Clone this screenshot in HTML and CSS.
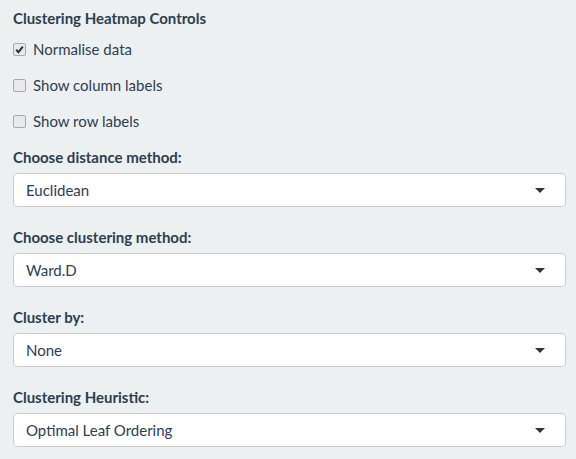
FILE: index.html
```html
<!DOCTYPE html>
<html>
<head>
<meta charset="utf-8">
<link rel="stylesheet" href="styles.css">
</head>
<body>
<div class="panel">
  <div class="title">Clustering Heatmap Controls</div>
  <div class="checks">
    <label class="check"><span class="box checked"><svg width="9" height="9" viewBox="0 0 9 9"><path d="M1.2 4.8 L3.5 7.2 L7.8 1.6" fill="none" stroke="#333" stroke-width="2"/></svg></span>Normalise data</label>
    <label class="check"><span class="box"></span>Show column labels</label>
    <label class="check"><span class="box"></span>Show row labels</label>
  </div>
  <div class="group">
    <div class="label">Choose distance method:</div>
    <div class="select">Euclidean<span class="caret"></span></div>
  </div>
  <div class="group">
    <div class="label">Choose clustering method:</div>
    <div class="select">Ward.D<span class="caret"></span></div>
  </div>
  <div class="group">
    <div class="label">Cluster by:</div>
    <div class="select">None<span class="caret"></span></div>
  </div>
  <div class="group">
    <div class="label">Clustering Heuristic:</div>
    <div class="select">Optimal Leaf Ordering<span class="caret"></span></div>
  </div>
</div>
</body>
</html>
```
FILE: styles.css
```css
html, body {
  margin: 0;
  padding: 0;
  background: #ecf0f1;
}
body {
  font-family: Lato, "Open Sans", sans-serif;
  font-size: 15px;
  line-height: 21px;
  color: #2c3e50;
}
.panel {
  padding: 8px 10px 0 13px;
  display: flex;
  flex-direction: column;
}
.title {
  font-weight: bold;
  height: 21px;
}
.checks {
  margin-top: 10px;
  display: flex;
  flex-direction: column;
  gap: 15px;
}
.check {
  display: flex;
  align-items: center;
  height: 21px;
  gap: 7px;
}
.box {
  width: 11px;
  height: 11px;
  border: 1px solid #a9a9a9;
  border-radius: 2px;
  background: #e9e9e9;
  display: flex;
  align-items: center;
  justify-content: center;
}
.group {
  margin-top: 15px;
  display: flex;
  flex-direction: column;
  gap: 5px;
}
.group + .group {
  margin-top: 20px;
}
.label {
  font-weight: bold;
  height: 21px;
}
.select {
  height: 32px;
  border: 1px solid #cccccc;
  border-radius: 4px;
  background: #ffffff;
  display: flex;
  align-items: center;
  padding: 0 20px 0 12px;
  justify-content: space-between;
  color: #2c3e50;
}
.caret {
  width: 0;
  height: 0;
  border-left: 5px solid transparent;
  border-right: 5px solid transparent;
  border-top: 5px solid #333333;
}
```
